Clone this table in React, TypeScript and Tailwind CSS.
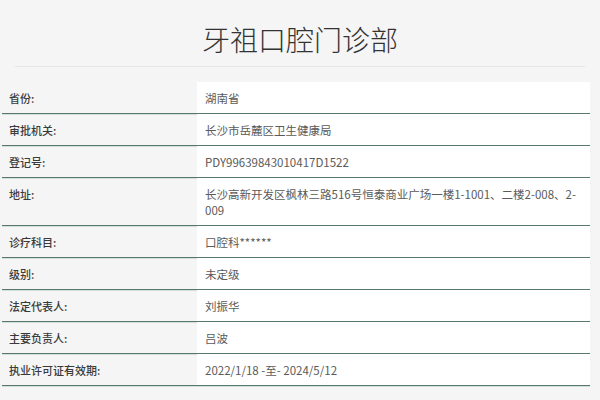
import React from 'react';

const ROWS: { label: string; value: string }[] = [
  { label: '省份:', value: '湖南省' },
  { label: '审批机关:', value: '长沙市岳麓区卫生健康局' },
  { label: '登记号:', value: 'PDY99639843010417D1522' },
  { label: '地址:', value: '长沙高新开发区枫林三路516号恒泰商业广场一楼1-1001、二楼2-008、2-009' },
  { label: '诊疗科目:', value: '口腔科******' },
  { label: '级别:', value: '未定级' },
  { label: '法定代表人:', value: '刘振华' },
  { label: '主要负责人:', value: '吕波' },
  { label: '执业许可证有效期:', value: '2022/1/18 -至- 2024/5/12' },
];

export default function App() {
  return (
    <div
      className="w-[600px] h-[400px] overflow-hidden bg-[#f5f5f5]"
      style={{ fontFamily: '"Noto Sans CJK SC", "Noto Sans", sans-serif' }}
    >
      {/* 标题 */}
      <div className="pt-[20px] pb-[8px] text-center text-[28px] leading-[38px] font-light text-[#333]">
        牙祖口腔门诊部
      </div>
      <div className="mx-[15px] h-px bg-[#e6e6e6]" />

      {/* 信息表 */}
      <div className="mt-[15px] ml-[2px] w-[588px]">
        {ROWS.map((row) => (
          <div
            key={row.label}
            className="flex items-stretch border-b border-[#56776a] shadow-[0_1px_0_#d3dfd9]"
          >
            <div className="w-[195px] shrink-0 pl-[7px] pt-[8px] pb-[7px] text-[11px] leading-[16px] font-medium text-[#3a3a3a]">
              {row.label}
            </div>
            <div className="flex-1 bg-white pl-[8px] pr-[14px] pt-[8px] pb-[7px] text-[11.5px] leading-[16px] text-[#5a5a5a]">
              {row.value}
            </div>
          </div>
        ))}
      </div>
    </div>
  );
}
